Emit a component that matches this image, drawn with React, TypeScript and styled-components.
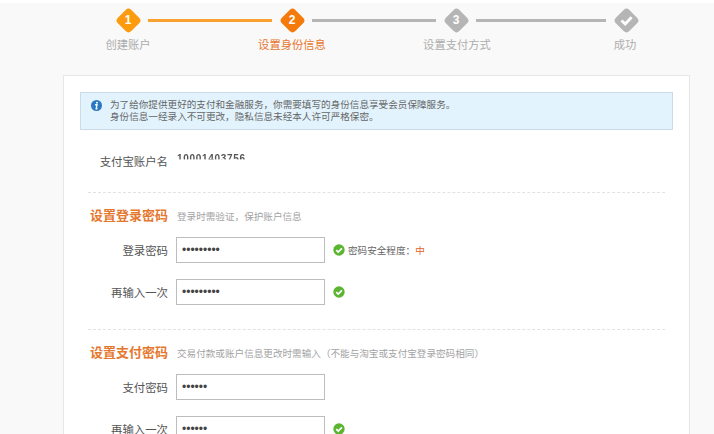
import React from "react";
import styled, { createGlobalStyle } from "styled-components";

const GlobalStyle = createGlobalStyle`
  html, body {
    margin: 0;
    height: 434px;
    overflow: hidden;
    background: #fff;
    font-family: "Liberation Sans", "Noto Sans CJK SC", sans-serif;
  }
`;

const Page = styled.div`
  margin-top: 3px;
  height: 431px;
  overflow: hidden;
  background: #f9f9f9;
`;

const Rail = styled.div`
  display: flex;
  align-items: center;
  height: 34px;
  padding-left: 116px;
`;

const Diamond = styled.div<{ $color: string }>`
  flex: none;
  width: 24px;
  height: 24px;
  display: flex;
  align-items: center;
  justify-content: center;
  color: #fff;
  font-size: 12px;
  font-weight: bold;

  &::before {
    content: "";
    width: 19px;
    height: 19px;
    flex: none;
    border-radius: 4px;
    background: ${(p) => p.$color};
    transform: rotate(45deg);
  }

  span, svg {
    flex: none;
    margin-left: -19px;
    width: 19px;
    text-align: center;
    position: relative;
  }
`;

const Line = styled.div<{ $color: string; $width: number }>`
  flex: none;
  height: 3px;
  width: ${(p) => p.$width}px;
  margin: 0 8px;
  background: ${(p) => p.$color};
`;

const Labels = styled.div`
  display: flex;
  padding-left: 46px;
  margin-top: 1px;
`;

const StepLabel = styled.div<{ $active?: boolean; $width: number }>`
  width: ${(p) => p.$width}px;
  text-align: center;
  font-size: 11.3px;
  line-height: 14px;
  color: ${(p) => (p.$active ? "#e8772e" : "#adadad")};
`;

const Card = styled.div`
  margin: 23px 0 0 63px;
  width: 627px;
  height: 400px;
  box-sizing: border-box;
  padding: 16px 16px 0;
  background: #fff;
  border: 1px solid #e6e6e6;
`;

const Notice = styled.div`
  display: flex;
  gap: 8px;
  box-sizing: border-box;
  height: 38px;
  padding: 6px 10px;
  background: #e2f3fd;
  border: 1px solid #c9dbe8;
  font-size: 9.6px;
  line-height: 12px;
  color: #666;
`;

const InfoIcon = styled.svg`
  flex: none;
  width: 11px;
  height: 11px;
  margin-top: 1px;
`;

const Body = styled.div`
  padding: 0 8px;
`;

const AccountRow = styled.div`
  display: flex;
  align-items: center;
  height: 62px;
  border-bottom: 1px dashed #e2e2e2;
  margin-bottom: 12px;
`;

const RowLabel = styled.div`
  flex: none;
  width: 80px;
  margin-right: 8px;
  text-align: right;
  font-size: 11.4px;
  color: #555;
`;

// the reference shows this number wiped out below its upper half
const AccountValue = styled.div`
  margin: -4px 0 0 1px;
  font-size: 10px;
  line-height: 10px;
  letter-spacing: 0.7px;
  font-weight: bold;
  color: #555;
  -webkit-mask-image: linear-gradient(to bottom, #000 45%, transparent 62%);
  mask-image: linear-gradient(to bottom, #000 45%, transparent 62%);
`;

const SectionHead = styled.div`
  display: flex;
  align-items: baseline;
  height: 15px;
  margin-bottom: 17px;
`;

const SectionTitle = styled.div`
  flex: none;
  width: 80px;
  margin-right: 9px;
  text-align: right;
  font-size: 13px;
  font-weight: bold;
  color: #e5782f;
`;

const SectionHint = styled.div`
  font-size: 9.6px;
  color: #a3a3a3;
`;

const FieldRow = styled.div`
  display: flex;
  align-items: center;
  height: 26px;
  margin-bottom: 16px;
`;

const PasswordBox = styled.input`
  flex: none;
  box-sizing: border-box;
  width: 149px;
  height: 26px;
  margin: 0;
  padding: 0 5px;
  background: #fff;
  border: 1px solid #bdbdbd;
  border-radius: 0;
  outline: none;
  font-family: "Liberation Sans", sans-serif;
  font-size: 12px;
  color: #444;
`;

const CheckIcon = styled.svg`
  flex: none;
  width: 12px;
  height: 12px;
  margin-left: 8px;
`;

const Strength = styled.div`
  margin-left: 3px;
  font-size: 9.6px;
  color: #666;

  b {
    font-weight: normal;
    color: #e8621e;
  }
`;

const Divider = styled.div`
  border-top: 1px dashed #e2e2e2;
  margin: 24px 0 12px;
`;

const Check = () => (
  <CheckIcon viewBox="0 0 12 12">
    <circle cx="6" cy="6" r="5.7" fill="#5cb531" />
    <path d="M3.2 6.2 5.2 8.1 8.9 4.3" fill="none" stroke="#fff" strokeWidth="1.7" />
  </CheckIcon>
);

const Field = ({ label, value, children }: { label: string; value: string; children?: React.ReactNode }) => (
  <FieldRow>
    <RowLabel>{label}</RowLabel>
    <PasswordBox type="password" readOnly value={value} />
    {children}
  </FieldRow>
);

export default function App() {
  return (
    <Page>
      <GlobalStyle />
      <Rail>
        <Diamond $color="#fb9b0d"><span>1</span></Diamond>
        <Line $color="#f9a231" $width={124} />
        <Diamond $color="#f57a0c"><span>2</span></Diamond>
        <Line $color="#b5b5b5" $width={124} />
        <Diamond $color="#b5b5b5"><span>3</span></Diamond>
        <Line $color="#b5b5b5" $width={130} />
        <Diamond $color="#b5b5b5">
          <svg viewBox="0 0 19 19" height="19">
            <path d="M4.5 9.5 8.2 13 14.6 6.3" fill="none" stroke="#fff" strokeWidth="2.8" />
          </svg>
        </Diamond>
      </Rail>
      <Labels>
        <StepLabel $width={164}>创建账户</StepLabel>
        <StepLabel $width={164} $active>设置身份信息</StepLabel>
        <StepLabel $width={166}>设置支付方式</StepLabel>
        <StepLabel $width={170}>成功</StepLabel>
      </Labels>
      <Card>
        <Notice>
          <InfoIcon viewBox="0 0 11 11">
            <circle cx="5.5" cy="5.5" r="5.5" fill="#2a78c4" />
            <rect x="5" y="1.9" width="1.8" height="1.6" fill="#fff" />
            <path d="M4.1 4.7h1.9L5.2 8.9h1.4" fill="none" stroke="#fff" strokeWidth="1.4" />
          </InfoIcon>
          <div>
            为了给你提供更好的支付和金融服务，你需要填写的身份信息享受会员保障服务。
            <br />
            身份信息一经录入不可更改，隐私信息未经本人许可严格保密。
          </div>
        </Notice>
        <Body>
          <AccountRow>
            <RowLabel>支付宝账户名</RowLabel>
            <AccountValue>10001403756</AccountValue>
          </AccountRow>
          <SectionHead>
            <SectionTitle>设置登录密码</SectionTitle>
            <SectionHint>登录时需验证，保护账户信息</SectionHint>
          </SectionHead>
          <Field label="登录密码" value="123456789">
            <Check />
            <Strength>密码安全程度：<b>中</b></Strength>
          </Field>
          <Field label="再输入一次" value="123456789">
            <Check />
          </Field>
          <Divider />
          <SectionHead>
            <SectionTitle>设置支付密码</SectionTitle>
            <SectionHint>交易付款或账户信息更改时需输入（不能与淘宝或支付宝登录密码相同）</SectionHint>
          </SectionHead>
          <Field label="支付密码" value="123456" />
          <Field label="再输入一次" value="123456">
            <Check />
          </Field>
        </Body>
      </Card>
    </Page>
  );
}
